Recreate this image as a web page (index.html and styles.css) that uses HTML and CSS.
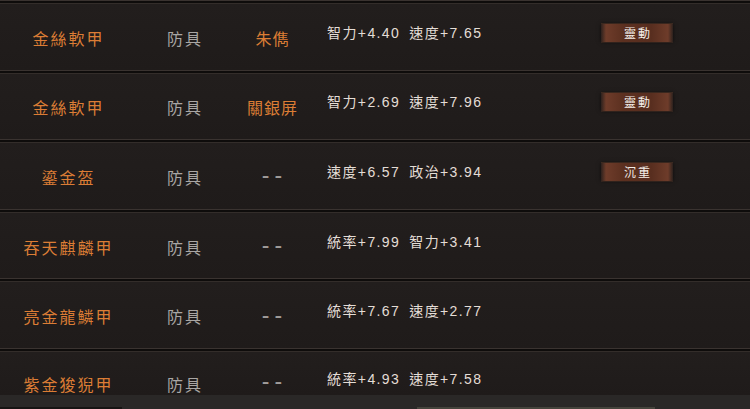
FILE: index.html
```html
<!DOCTYPE html>
<html lang="zh-Hant">
<head>
<meta charset="utf-8">
<link rel="stylesheet" href="styles.css">
</head>
<body>
<div class="screen">
  <div class="list">
    <div class="sep"></div>
    <div class="row">
      <div class="name">金絲軟甲</div>
      <div class="type">防具</div>
      <div class="owner">朱儁</div>
      <div class="stats"><span class="stat">智力+4.40</span><span class="stat">速度+7.65</span></div>
      <div class="badge-cell"><span class="badge">靈動</span></div>
    </div>
    <div class="sep"></div>
    <div class="row">
      <div class="name">金絲軟甲</div>
      <div class="type">防具</div>
      <div class="owner">關銀屏</div>
      <div class="stats"><span class="stat">智力+2.69</span><span class="stat">速度+7.96</span></div>
      <div class="badge-cell"><span class="badge">靈動</span></div>
    </div>
    <div class="sep"></div>
    <div class="row">
      <div class="name">鎏金盔</div>
      <div class="type">防具</div>
      <div class="owner none">--</div>
      <div class="stats"><span class="stat">速度+6.57</span><span class="stat">政治+3.94</span></div>
      <div class="badge-cell"><span class="badge">沉重</span></div>
    </div>
    <div class="sep"></div>
    <div class="row">
      <div class="name">吞天麒麟甲</div>
      <div class="type">防具</div>
      <div class="owner none">--</div>
      <div class="stats"><span class="stat">統率+7.99</span><span class="stat">智力+3.41</span></div>
      <div class="badge-cell"></div>
    </div>
    <div class="sep"></div>
    <div class="row">
      <div class="name">亮金龍鱗甲</div>
      <div class="type">防具</div>
      <div class="owner none">--</div>
      <div class="stats"><span class="stat">統率+7.67</span><span class="stat">速度+2.77</span></div>
      <div class="badge-cell"></div>
    </div>
    <div class="sep"></div>
    <div class="row last">
      <div class="name">紫金狻猊甲</div>
      <div class="type">防具</div>
      <div class="owner none">--</div>
      <div class="stats"><span class="stat">統率+4.93</span><span class="stat">速度+7.58</span></div>
      <div class="badge-cell"></div>
    </div>
  </div>
  <div class="footer">
    <div class="foot-left"></div>
    <div class="foot-mid"></div>
  </div>
</div>
</body>
</html>
```

FILE: styles.css
```css
html, body {
  margin: 0;
  padding: 0;
}
body {
  width: 750px;
  height: 409px;
  overflow: hidden;
  background: #1d1a19;
  font-family: "Noto Sans CJK TC", "Noto Sans CJK SC", sans-serif;
}
.screen {
  display: flex;
  flex-direction: column;
  height: 409px;
}
.list {
  height: 395px;
  overflow: hidden;
  background: #201c1b;
}
.sep {
  height: 4px;
  box-sizing: border-box;
  border-top: 1px solid #3a3330;
  border-bottom: 1px solid #332d2a;
  background: #0e0c0b;
}
.row {
  height: 65.6px;
  display: grid;
  grid-template-columns: 135px 98px 78px 290px 72px;
  align-items: center;
  background: linear-gradient(180deg, #221e1d 0%, #1f1b1a 100%);
}
.row.last {
  height: 43px;
  box-sizing: border-box;
  align-items: end;
  padding-bottom: 0;
}
.name {
  text-align: center;
  color: #dc7d35;
  font-size: 16px;
  line-height: 22px;
  letter-spacing: 2px;
  padding-left: 2px;
  padding-top: 2px;
}
.type {
  text-align: center;
  color: #a9a6a4;
  font-size: 16px;
  line-height: 22px;
  letter-spacing: 2px;
  padding-left: 2px;
  padding-top: 2px;
}
.owner {
  text-align: center;
  color: #dc7d35;
  font-size: 16px;
  line-height: 22px;
  letter-spacing: 1px;
  padding-left: 1px;
  padding-top: 2px;
}
.owner.none {
  color: #a09c9a;
  font-family: "Liberation Sans", sans-serif;
  font-size: 23px;
  line-height: 27px;
  letter-spacing: 5px;
  padding-left: 5px;
  padding-top: 0;
}
.stats {
  padding-left: 16px;
  padding-bottom: 8px;
  color: #e4ddd6;
  font-family: "Liberation Sans", "Noto Sans CJK TC", sans-serif;
  font-size: 14px;
  line-height: 20px;
  letter-spacing: 1.4px;
  display: flex;
  gap: 9px;
  white-space: nowrap;
}
.row.last .stats {
  padding-bottom: 6px;
}
.badge-cell {
  padding-bottom: 8px;
  display: flex;
}
.badge {
  width: 72px;
  height: 18px;
  line-height: 18px;
  text-align: center;
  font-size: 12px;
  letter-spacing: 2px;
  padding-left: 2px;
  box-sizing: border-box;
  color: #f4eee8;
  background: linear-gradient(90deg, rgba(90, 50, 35, 0.2) 0%, #6e3c2a 7%, #5c3020 30%, #582e1f 70%, #6e3c2a 93%, rgba(90, 50, 35, 0.2) 100%);
  box-shadow: 0 -1px 0 rgba(120, 75, 50, 0.35), 0 1px 0 rgba(120, 75, 50, 0.25), 0 0 4px rgba(0, 0, 0, 0.6);
}
.footer {
  height: 14px;
  background: #2a2827;
  display: flex;
  align-items: flex-end;
}
.foot-left {
  width: 122px;
  height: 2px;
  background: #161413;
}
.foot-mid {
  margin-left: 295px;
  width: 238px;
  height: 2px;
  background: #45443c;
}
```
